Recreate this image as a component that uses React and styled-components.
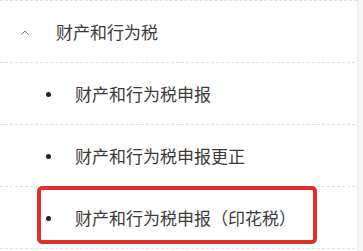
import React from "react";
import styled, { createGlobalStyle } from "styled-components";

const GlobalStyle = createGlobalStyle`
    html, body {
        margin: 0;
        padding: 0;
        background: #ffffff;
    }
    body {
        font-family: "Noto Sans CJK SC", "Noto Sans", sans-serif;
        color: #333333;
    }
`;

const items = [
    { label: "财产和行为税申报" },
    { label: "财产和行为税申报更正" },
    { label: "财产和行为税申报（印花税）", marked: true },
];

const Page = () => {
    return (
        <Frame>
            <List>
                <Row>
                    <Caret>
                        <svg width="8" height="5" viewBox="0 0 8 5">
                            <polyline points="0.5,4.5 4,1 7.5,4.5" fill="none" stroke="#777" strokeWidth="1" />
                        </svg>
                    </Caret>
                    <Label>财产和行为税</Label>
                </Row>
                {items.map((item) => (
                    <Row key={item.label} $child>
                        <Dot />
                        <Label>{item.label}</Label>
                        {item.marked && <Mark />}
                    </Row>
                ))}
            </List>
            <Track />
        </Frame>
    );
};

const Frame = styled.div`
    display: flex;
    width: 363px;
    height: 251px;
    overflow: hidden;
`;

const List = styled.div`
    flex: 1;
    padding-right: 2px;
    border-top: 1px dashed #e0e0e0;
`;

const Row = styled.div`
    position: relative;
    display: flex;
    align-items: center;
    height: 61px;
    padding-left: ${(p) => (p.$child ? "46px" : "20px")};
    border-bottom: 1px dashed #e0e0e0;
`;

const Caret = styled.span`
    display: flex;
    width: 35px;
    padding-left: 1px;
    margin-top: 2px;
`;

const Dot = styled.span`
    width: 5px;
    height: 5px;
    border-radius: 50%;
    background: #222;
    margin-right: 24px;
    margin-top: 1px;
`;

const Label = styled.span`
    font-size: 17px;
    line-height: 20px;
    color: #3a3a3a;
    white-space: nowrap;
`;

// red annotation box drawn over the selected row
const Mark = styled.div`
    position: absolute;
    left: 37px;
    top: -1px;
    width: 272px;
    height: 50px;
    border: 4px solid #e0302a;
    border-radius: 5px;
`;

const Track = styled.div`
    width: 5px;
    background: #f6f6f6;
    border-left: 1px solid #ececec;
`;

const App = () => (
    <>
        <GlobalStyle />
        <Page />
    </>
);

export default App;
